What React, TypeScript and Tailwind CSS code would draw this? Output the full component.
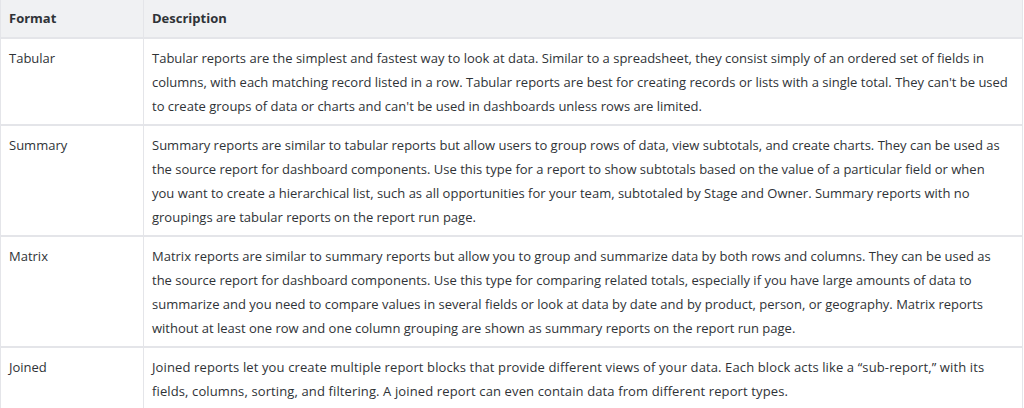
import React from 'react'

const rows = [
  {
    format: 'Tabular',
    description:
      "Tabular reports are the simplest and fastest way to look at data. Similar to a spreadsheet, they consist simply of an ordered set of fields in columns, with each matching record listed in a row. Tabular reports are best for creating records or lists with a single total. They can't be used to create groups of data or charts and can't be used in dashboards unless rows are limited.",
    tight: false,
  },
  {
    format: 'Summary',
    description:
      'Summary reports are similar to tabular reports but allow users to group rows of data, view subtotals, and create charts. They can be used as the source report for dashboard components. Use this type for a report to show subtotals based on the value of a particular field or when you want to create a hierarchical list, such as all opportunities for your team, subtotaled by Stage and Owner. Summary reports with no groupings are tabular reports on the report run page.',
    tight: false,
  },
  {
    format: 'Matrix',
    description:
      'Matrix reports are similar to summary reports but allow you to group and summarize data by both rows and columns. They can be used as the source report for dashboard components. Use this type for comparing related totals, especially if you have large amounts of data to summarize and you need to compare values in several fields or look at data by date and by product, person, or geography. Matrix reports without at least one row and one column grouping are shown as summary reports on the report run page.',
    tight: false,
  },
  {
    format: 'Joined',
    description:
      'Joined reports let you create multiple report blocks that provide different views of your data. Each block acts like a \u201csub-report,\u201d with its fields, columns, sorting, and filtering. A joined report can even contain data from different report types.',
    tight: true,
  },
]

export default function App() {
  return (
    <div className="w-[1024px] h-[408px] overflow-hidden bg-white font-['Open_Sans',sans-serif] text-[13px] leading-6 text-[#2f3337]">
      <table className="w-[1023px] border-collapse border-l border-r border-[#e4e5e9] table-fixed">
        <thead>
          <tr className="bg-[#f0f1f3] border-b-2 border-[#e4e5e9]">
            <th className="w-[143px] border-r border-[#e4e5e9] px-2 pt-[6px] pb-[7px] text-left font-bold">Format</th>
            <th className="pl-2 pr-[14px] pt-[6px] pb-[7px] text-left font-bold">Description</th>
          </tr>
        </thead>
        <tbody>
          {rows.map((row) => (
            <tr key={row.format} className="border-b-2 border-[#e4e5e9] align-top">
              <td className="border-r border-[#e4e5e9] px-2 pt-[7px] pb-[6px]">{row.format}</td>
              <td className={row.tight ? 'pl-2 pr-[14px] pt-[7px] pb-[6px] tracking-[0.12px]' : 'pl-2 pr-[14px] pt-[7px] pb-[6px]'}>
                {row.description}
              </td>
            </tr>
          ))}
        </tbody>
      </table>
    </div>
  )
}
